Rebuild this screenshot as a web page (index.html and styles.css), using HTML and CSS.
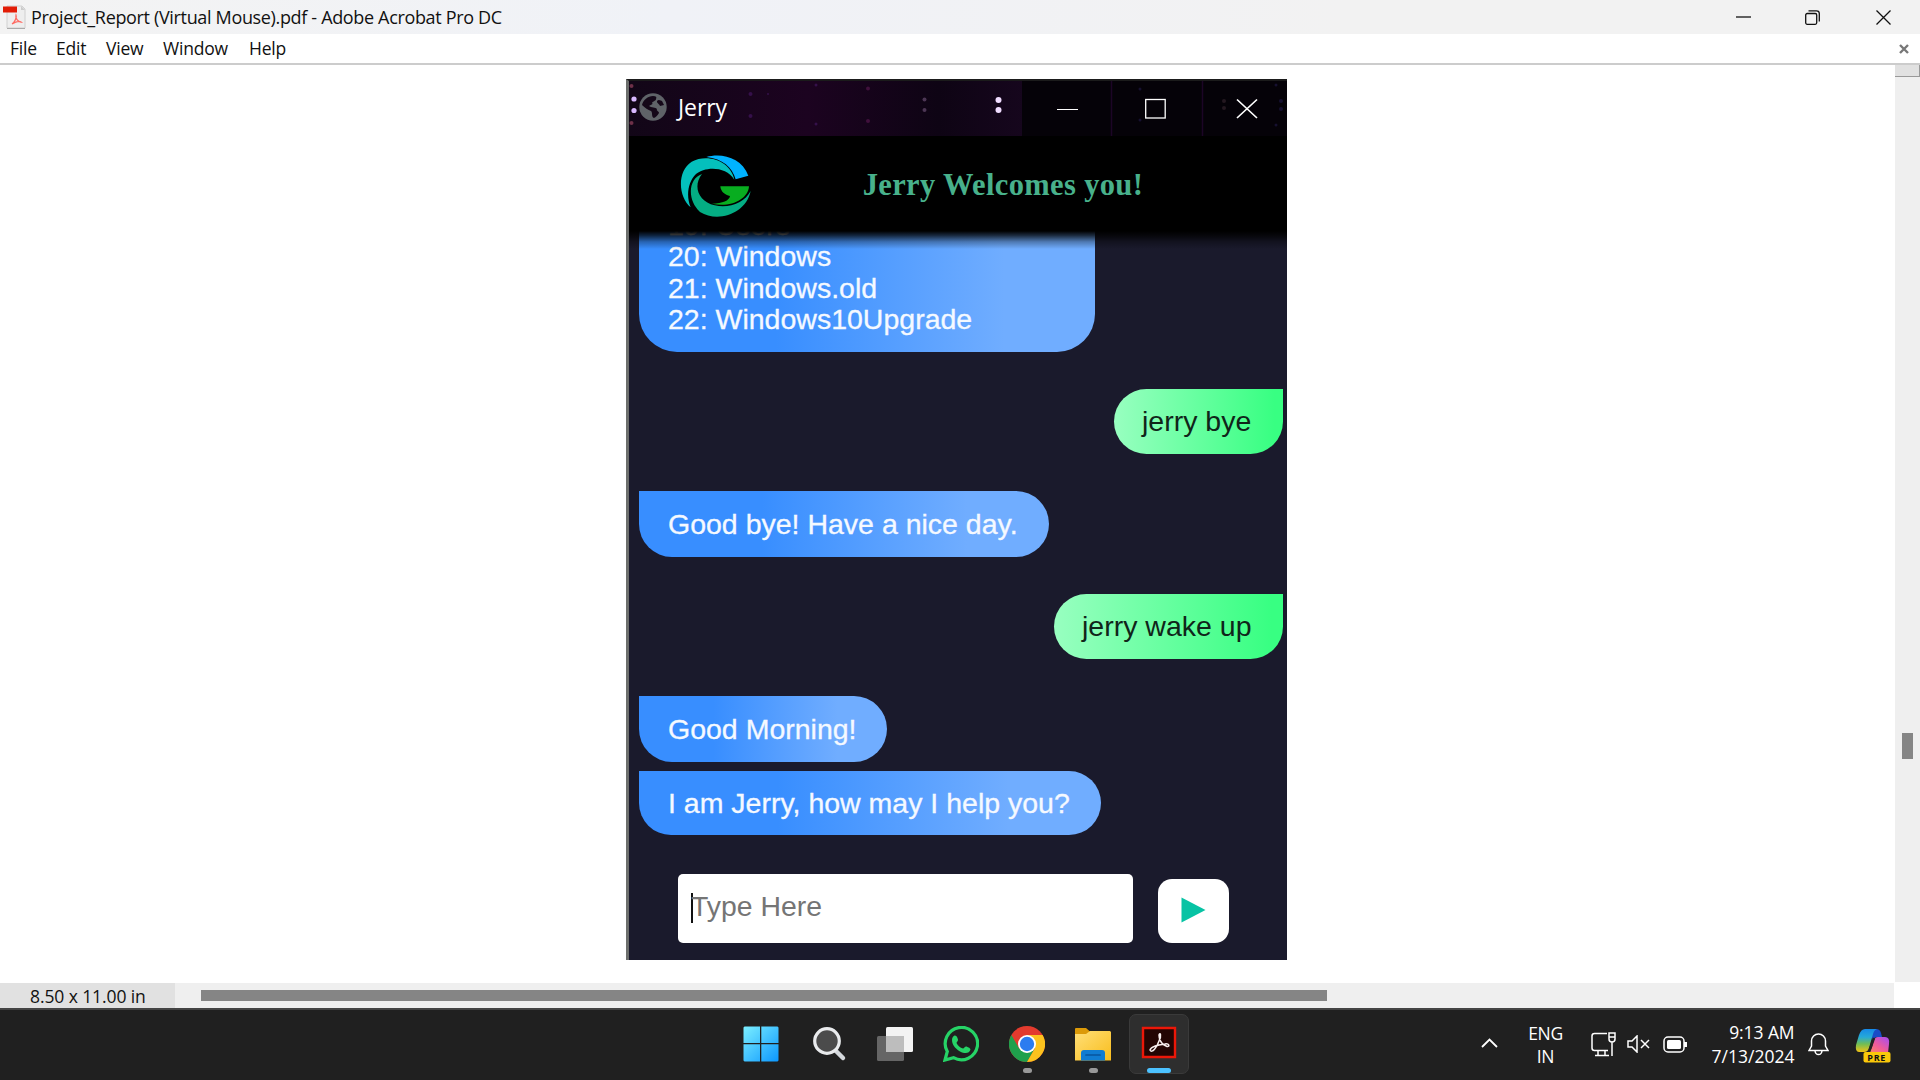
FILE: index.html
```html
<!DOCTYPE html>
<html lang="en">
<head>
<meta charset="utf-8">
<title>Project_Report (Virtual Mouse).pdf - Adobe Acrobat Pro DC</title>
<link rel="stylesheet" href="styles.css">
</head>
<body>
<header class="titlebar">
  <svg class="pdf-icon" width="23" height="25" viewBox="0 0 23 25"><path d="M4 1H19L22 4V23H4Z" fill="#eee" stroke="#d0d0d0"/><path d="M18 1V5H22Z" fill="#ccc"/><path d="M4 23.500H22" stroke="#aaa"/><path d="M0 1.500H14V7.500H0Z" fill="#e21c06"/><path d="M9 19C12 17 14 12 13 10C12 13 15 17 18 17C15 15 12 17 9 19" fill="none" stroke="#ff6a62" stroke-width="1.300"/></svg>
  <span class="title">Project_Report (Virtual Mouse).pdf - Adobe Acrobat Pro DC</span>
  <div class="controls">
    <svg width="15" height="15" viewBox="0 0 15 15"><path d="M0 7H15"/></svg>
    <svg width="15" height="15" viewBox="0 0 15 15"><rect x=".7" y="3.500" width="11" height="10.800" rx="1.500"/><path d="M3.500 .8H11.500Q14.300 .8 14.300 3.600V11.500"/></svg>
    <svg width="15" height="15" viewBox="0 0 15 15"><path d="M.5 .5L14.500 14.500M14.500 .5L.5 14.500"/></svg>
  </div>
</header>
<nav class="menubar">
  <span class="m-file">File</span><span class="m-edit">Edit</span><span class="m-view">View</span><span class="m-window">Window</span><span class="m-help">Help</span>
  <svg class="doc-close" width="10" height="10" viewBox="0 0 10 10"><path d="M1 1L9 9M9 1L1 9" stroke="#777" stroke-width="2.400"/></svg>
</nav>
<div class="workspace">
  <main class="page">
    <section class="app">
      <div class="app-title">
        <svg class="stars" width="658" height="55" viewBox="0 0 658 55">
          <g fill="#d9b8ff"><circle cx="5" cy="18" r="2.600"/><circle cx="5" cy="29.500" r="2.600"/></g>
          <g fill="#f0dcff"><circle cx="369.500" cy="19" r="3"/><circle cx="369.500" cy="29" r="3"/></g>
          <g fill="#6d3048"><circle cx="2.500" cy="5" r="2"/><circle cx="2.500" cy="42" r="2"/></g>
          <g fill="#35104a"><circle cx="121.500" cy="13" r="2"/><circle cx="121.500" cy="35" r="2"/><circle cx="187" cy="4" r="1.500"/><circle cx="187" cy="43" r="1.500"/><circle cx="139" cy="13" r="1"/></g>
          <g fill="#40103c"><circle cx="239" cy="7.500" r="2"/><circle cx="239" cy="40" r="2"/></g>
          <g fill="#4c3654"><circle cx="295.500" cy="18.500" r="2"/><circle cx="295.500" cy="29" r="2"/></g>
          <path fill="#050208" d="M393 0H658V55H393Z"/><path stroke="#1c0526" stroke-width="1.500" d="M482.500 0V55M573.500 0V55"/>
          <g fill="#161030"><circle cx="652" cy="20" r="2"/><circle cx="652" cy="28" r="2"/><circle cx="647" cy="4" r="1.500"/><circle cx="647" cy="44" r="1.500"/><circle cx="511" cy="8" r="1.500"/><circle cx="511" cy="39" r="1.500"/></g>
          <g fill="#241820"><circle cx="595" cy="20" r="2"/><circle cx="595" cy="27" r="2"/></g>
        </svg>
        <svg class="globe" width="28" height="28" viewBox="0 0 28 28"><circle cx="14" cy="14" r="13.700" fill="#5f6368"/><path d="M14 3C17 3 18 4 17 6C17 8 14 8 13 10C15 11 11 12 10 13C12 15 17 14 18 16C17 18 20 18 20 20C18 23 17 24 15 25C12 24 14 20 12 18C9 17 6 15 3 12C4 7 9 3 14 3M18 8C20 6 22 8 23 8L25 12L21 13C20 10 18 11 18 8Z" fill="#140718"/></svg>
        <span class="app-name">Jerry</span>
        <svg class="app-controls" width="202" height="22" viewBox="0 0 202 22" fill="none" stroke="#fff"><path d="M1 12.500H22"/><rect x="89.700" y="2.500" width="19.500" height="18.500" stroke-width="1.300"/><path d="M181 2.500L201 21M201 2.500L181 21" stroke-width="1.700"/></svg>
      </div>
      <div class="app-header">
        <svg class="logo" width="71.670" height="63.330" viewBox="180 255 215 190">
          <path fill="#04c0bc" d="M212 412C174 382 171 302 215 275C265 248 334 276 343 329C318 286 252 290 228 312C203 336 198 380 212 412Z"/>
          <path fill="#00b2ff" d="M259 261C304 248 365 262 385 317L347 328C337 292 308 266 259 261Z"/>
          <path fill="#04ad83" d="M246 312C204 326 201 391 240 426C293 459 378 432 392 363C374 398 326 417 284 406C236 394 217 350 246 312Z"/>
          <path fill="#08ad20" d="M301 349H387C385 389 330 414 276 401C308 400 328 392 330 378C315 375 302 365 301 349Z"/>
        </svg>
        <h1 class="welcome">Jerry Welcomes you!</h1>
      </div>
      <div class="chat">
        <div class="msg bot listing">19: Users<br>20: Windows<br>21: Windows.old<br>22: Windows10Upgrade</div>
        <div class="msg user bye">jerry bye</div>
        <div class="msg bot goodbye">Good bye! Have a nice day.</div>
        <div class="msg user wake">jerry wake up</div>
        <div class="msg bot morning">Good Morning!</div>
        <div class="msg bot help">I am Jerry, how may I help you?</div>
      </div>
      <div class="composer">
        <div class="field"><i class="caret"></i><span>Type Here</span></div>
        <div class="send"><svg width="25" height="26" viewBox="0 0 25 26"><path d="M.5 .5L24.500 13L.5 25.500Z" fill="#07c3a4"/></svg></div>
      </div>
    </section>
  </main>
  <aside class="vscroll"><i class="vbutton"></i><i class="vthumb"></i></aside>
</div>
<footer class="status"><span class="size">8.50 x 11.00 in</span><div class="hscroll"><i class="hthumb"></i></div></footer>
<div class="taskbar">
  <div class="apps">
    <span class="slot first"><svg width="36" height="36" viewBox="0 0 36 36"><defs><linearGradient id="win" gradientUnits="userSpaceOnUse" x1="0" y1="0" x2="36" y2="36"><stop stop-color="#7df0ff"/><stop offset="1" stop-color="#0a96ff"/></linearGradient></defs><path fill="url(#win)" d="M1.500 .5H17V17H.5V1.500ZM18.300 .5H34.500L35.500 1.500V17H18.300ZM.5 18.300H17V35.500H1.500L.5 34.500ZM18.300 18.300H35.500V34.500L34.500 35.500H18.300Z"/></svg></span>
    <span class="slot"><svg width="36" height="36" viewBox="0 0 36 36"><path d="M24 24L32 32" stroke="#d4d8dc" stroke-width="4.500" stroke-linecap="round"/><circle cx="16" cy="15" r="12.300" fill="#4b4b4b" stroke="#e9ebed" stroke-width="3.200"/></svg></span>
    <span class="slot"><svg width="36" height="36" viewBox="0 0 36 36"><rect x="0" y="10" width="27" height="25" rx="1.500" fill="#656565"/><rect x="9" y="1" width="27" height="25" rx="1.500" fill="#f3f3f3"/><path d="M9 10H27V26H9Z" fill="#bdbdbd"/></svg></span>
    <span class="slot"><svg width="36" height="36" viewBox="0 0 36 36"><path d="M2 34L4.300 25.500A16.200 16.200 0 1 1 10.500 31.700Z" fill="none" stroke="#26d366" stroke-width="3.200"/><path d="M11.500 9.500C13.500 9 14.500 11.500 15 13.500C15.300 15 13.500 16 13.500 17C15 20 17 21.500 20 22.500C21 22.500 22 20 23.500 20.500C25.500 21.300 27.500 22.300 27.500 23.500C26.500 27.500 22 28 17 25.500C11.500 22 9 18 9 14C9 12 10 10 11.500 9.500Z" fill="#26d366"/></svg></span>
    <span class="slot running"><svg width="36" height="36" viewBox="0 0 36 36"><circle cx="18" cy="18" r="18" fill="#e33b2e"/><path d="M2.400 9A18 18 0 0 0 18 36L25.800 22.500L18 27L10.200 22.500Z" fill="#1fa04c"/><path d="M18 36A18 18 0 0 0 33.600 9H18L25.800 22.500Z" fill="#fcc31e"/><circle cx="18" cy="18" r="9" fill="#fff"/><circle cx="18" cy="18" r="7.200" fill="#2b7cf0"/></svg></span>
    <span class="slot running"><svg width="36" height="36" viewBox="0 0 36 36"><defs><linearGradient id="fold" x2="1" y2="1"><stop stop-color="#ffdf78"/><stop offset="1" stop-color="#f9bd1c"/></linearGradient></defs><path d="M0 3Q0 2 1 2H11L15 5.500H20V10H0Z" fill="#dc9a08"/><path d="M0 8H11L15 5H35L36 6V34.500H0Z" fill="url(#fold)"/><path d="M6 34.500V27Q6 24 9 24H27Q30 24 30 27V34.500Z" fill="#107cd2"/><path d="M11 29H25" stroke="#07549e" stroke-width="1.700" stroke-linecap="round"/></svg></span>
    <span class="slot current"><svg width="36" height="36" viewBox="0 0 36 36"><path d="M2 2H34V31H2Z" fill="#230503" stroke="#eb1708" stroke-width="2.400"/><path d="M9 24C10 20 17 19 24 18C29 17 29 22 25 20C19 18 18 11 18 9C19 6 21 9 18 15C16 21 11 28 9 24Z" fill="none" stroke="#f6eeee" stroke-width="1.500"/></svg></span>
  </div>
  <div class="tray">
    <svg class="chev" width="17" height="10" viewBox="0 0 17 10"><path d="M1 9L8.500 1.500L16 9" stroke-width="1.800"/></svg>
    <div class="lang"><span>ENG</span><span>IN</span></div>
    <svg class="net" width="25" height="25" viewBox="0 0 25 25"><path d="M16 1.500H3.500Q1 1.500 1 4V16Q1 18.500 3.500 18.500H17M7 18.500V23M14 18.500V23M4 23.500H18M18 1H24V7Q24 10 21 10Q18 10 18 7ZM18 5H24M21 10V24"/></svg>
    <svg class="vol" width="24" height="18" viewBox="0 0 24 18"><path d="M1 6H5L10 1V17L5 12H1ZM14 5L22 13M22 5L14 13"/></svg>
    <svg class="bat" width="25" height="17" viewBox="0 0 25 17"><rect x="1" y="1" width="20" height="15" rx="4"/><rect x="4" y="4" width="14" height="9" rx="1.500" fill="#fff" stroke="none"/><path d="M22.500 6V11" stroke-width="3"/></svg>
    <div class="clock"><span class="time">9:13 AM</span><span class="date">7/13/2024</span></div>
    <svg class="bell" width="21" height="23" viewBox="0 0 21 23"><path d="M1 17.500L3.500 13V8A7 7 0 0 1 17.500 8V13L20 17.500ZM7 18Q7.500 21.500 10.500 21.500T14 18"/></svg>
    <svg class="pilot" width="36" height="36" viewBox="0 0 36 36"><defs><linearGradient id="ca" x2="0" y2="1"><stop stop-color="#1689e8"/><stop offset=".35" stop-color="#25a9d8"/><stop offset=".65" stop-color="#70bd55"/><stop offset="1" stop-color="#f3c213"/></linearGradient><linearGradient id="cb" x1="1" x2="0" y2="1"><stop stop-color="#a44df5"/><stop offset=".5" stop-color="#ef5b9b"/><stop offset="1" stop-color="#ff9055"/></linearGradient></defs><path d="M16 1H21Q25 1 26 5L27 9H22Q19 9 17 13Z" fill="#194bc7"/><path d="M10 1H22Q19 2 18 6L14 20Q13 24 9 24H4Q0 24 1 17L4 7Q6 1 10 1Z" fill="url(#ca)"/><path d="M23 9H30Q35 9 34 16L33 25H10Q15 25 17 19L19 12Q20 9 23 9Z" fill="url(#cb)"/><path d="M19 10L14 24" stroke="#222" stroke-width="2.500"/><rect x="8.500" y="24" width="27" height="10.500" rx="2" fill="#fbc90a"/><text x="12.300" y="32.500" class="pre">PRE</text></svg>
  </div>
</div>
</body>
</html>
```

FILE: styles.css
```css
* { box-sizing: border-box; }
body {
  margin: 0; width: 1920px; height: 1080px; overflow: hidden;
  display: flex; flex-direction: column; background: #fff; color: #111;
  font-family: "Open Sans", "Noto Sans", sans-serif; font-size: 17px;
}
svg { display: block; flex: none; }
i { display: block; }
span, h1, .msg { white-space: nowrap; }

.titlebar { height: 34px; flex: none; display: flex; align-items: center; padding: 0 29px 0 3px; background: linear-gradient(90deg, #f3f3f3, #f0f2f7 35%, #f2f2f2 70%); }
.title { margin-left: 5px; line-height: 34px; font-size: 18px; letter-spacing: -0.340px; }
.controls { margin-left: auto; display: flex; gap: 54px; fill: none; stroke: #111; stroke-width: 1.300; }
.controls svg:last-child { margin-left: 2px; }

.menubar { height: 31px; flex: none; display: flex; align-items: center; padding: 0 11px 0 10px; border-bottom: 2px solid #ccc; font-size: 17.500px; line-height: 29px; letter-spacing: -0.2px; }
.m-file { width: 46px; }
.m-edit { width: 50px; }
.m-view { width: 57px; }
.m-window { width: 86px; }
.doc-close { margin-left: auto; }

.workspace { height: 918px; flex: none; display: flex; }
.page { flex: 1; padding: 14px 0 0 626px; }
.vscroll { width: 25px; height: 917px; background: #efefef; }
.vbutton { height: 12px; background: #e1e1e1; border: solid #999; border-width: 0 1px 1px 0; }
.vthumb { width: 11px; height: 26px; margin: 656px 0 0 7px; background: #858585; }

.app { width: 661px; height: 881px; border-left: 3px solid #6c6e6c; border-top: 2px solid #1b1b1b; background: #1a1a2c; display: flex; flex-direction: column; font-family: "Liberation Sans", sans-serif; }
.app-title { height: 55px; flex: none; display: flex; align-items: center; position: relative; background: linear-gradient(90deg, #120617, #1c0320 27%, #0e0414 47%, #16061d 60%); }
.stars { position: absolute; left: 0; top: 0; }
.globe { position: relative; margin: 0 0 3px 10px; }
.app-name { position: relative; margin: 0 0 3px 11px; width: 60px; color: #fff; font: 23px "Open Sans", sans-serif; letter-spacing: -0.1px; }
.app-controls { position: relative; margin: 0 29px 2px auto; }
.app-header { height: 95px; flex: none; display: flex; align-items: center; padding-left: 51px; background: #000; position: relative; z-index: 1; }
.app-header::after { content: ""; position: absolute; left: 0; top: 95px; width: 100%; height: 18px; background: linear-gradient(#000, rgba(0, 0, 0, .75) 25%, rgba(0, 0, 0, .3) 60%, rgba(0, 0, 0, 0)); }
.logo { margin-top: 6px; }
.welcome { margin: 4px 0 0 111px; font: bold 30.500px "Liberation Serif", serif; letter-spacing: .35px; color: #48b18b; }

.chat { height: 604px; flex: none; display: flex; flex-direction: column; align-items: flex-start; padding: 0 4px 0 9.500px; }
.msg { flex: none; font-size: 28.500px; padding: 0 0 0 29.500px; line-height: 66px; }
.bot { color: #f5f9ff; background: linear-gradient(90deg, #388eff 30%, #70adff 80%); border-radius: 0 33px 33px 33px; -webkit-text-stroke: .3px #f5f9ff; }
.user { align-self: flex-end; color: #10251a; background: linear-gradient(90deg, #98ffc0, #38ff82 95%); border-radius: 33px 0 33px 33px; padding-left: 28.500px; line-height: 64px; }
.listing { width: 456px; height: 142px; margin-top: -21px; line-height: 31.300px; border-radius: 0 0 38px 38px; }
.bye { width: 169.500px; height: 65px; margin-top: 37px; }
.goodbye { width: 410px; height: 66px; margin-top: 37px; }
.wake { width: 229.500px; height: 65px; margin-top: 37px; }
.morning { width: 248px; height: 66px; margin-top: 37px; }
.help { width: 462px; height: 64px; margin-top: 9px; line-height: 64px; }

.composer { display: flex; align-items: flex-start; gap: 25px; padding: 39px 0 0 49px; }
.field { width: 455px; height: 69px; background: #fff; border-radius: 5px; display: flex; align-items: center; padding-left: 12.500px; color: #757575; font-size: 28.400px; }
.field span { margin-top: -5px; }
.caret { width: 2px; height: 30px; background: #111; margin: -1px -1.500px 0 0; }
.send { width: 71px; height: 64px; margin-top: 5px; background: #fff; border-radius: 14px; padding: 18px 0 0 22.500px; }

.status { height: 25px; flex: none; display: flex; width: 1894px; background: #efefef; }
.size { width: 175px; background: #e1e1e1; padding-left: 30px; font-size: 17.500px; line-height: 26px; letter-spacing: -0.1px; }
.hscroll { padding: 7px 0 0 26px; }
.hthumb { width: 1126px; height: 11px; background: #858585; }

.taskbar { height: 72px; flex: none; display: flex; background: #202020; border-top: 2px solid #444; color: #fff; }
.apps { display: flex; width: 462px; margin-left: 728px; }
.slot { width: 66px; height: 68px; display: flex; align-items: center; justify-content: center; position: relative; }
.first { width: 68px; padding-right: 2px; }
.running::after, .current::after { content: ""; position: absolute; top: 58px; left: 29px; width: 9px; height: 5px; border-radius: 3px; background: #999; }
.current { width: 60px; height: 60px; margin: 4px 0 0 3px; background: #2e2e2e; border: 1px solid #3a3a3a; border-radius: 7px; }
.current::after { top: 53px; left: 17px; width: 24px; background: #4cc2ff; }
.tray { flex: 1; display: flex; align-items: flex-start; fill: none; stroke: #fff; stroke-width: 1.500; font-size: 17.500px; }
.chev { margin: 28px 0 0 290.500px; }
.lang { width: 60px; margin: 12px 0 0 18px; display: flex; flex-direction: column; align-items: center; line-height: 23px; letter-spacing: -0.4px; }
.net { margin: 22px 0 0 15px; }
.vol { margin: 25px 0 0 11px; }
.bat { margin: 26px 0 0 12px; }
.clock { width: 107px; margin-top: 10px; display: flex; flex-direction: column; align-items: flex-end; line-height: 24px; letter-spacing: 0; }
.time { letter-spacing: -0.1px; }
.bell { margin: 23px 0 0 13px; }
.pilot { margin: 18px 0 0 26px; stroke: none; }
.pre { font: bold 9px "Open Sans", sans-serif; letter-spacing: .7px; fill: #111; }
```
